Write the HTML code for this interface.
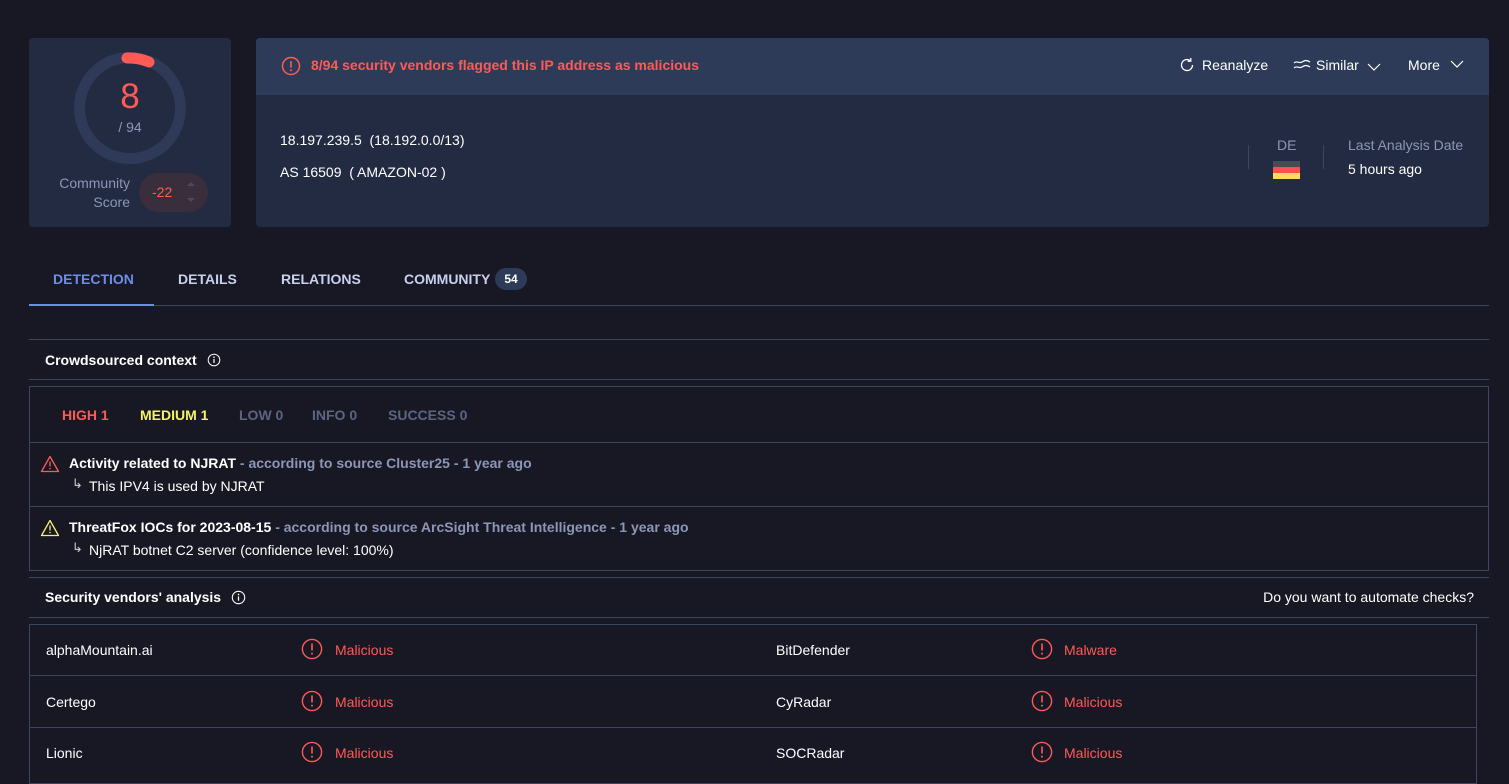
<!DOCTYPE html>
<html><head><meta charset="utf-8"><style>
*{box-sizing:border-box;margin:0;padding:0}
body{width:1509px;height:775px;overflow:hidden;background:#181825;font-family:"Liberation Sans",sans-serif;color:#fff;font-size:14px;position:relative}
.a{position:absolute;white-space:nowrap}
.hl{position:absolute;height:1px;background:#3c4663}
.red{color:#ff5a55}
.mut{color:#8b97b5}
.b{font-weight:bold}
</style></head><body>
<div class="a" style="left:29px;top:38px;width:202px;height:189px;background:#232b42;border-radius:4px"></div>
<svg class="a" style="left:73px;top:51px" width="114" height="114" viewBox="0 0 114 114">
<circle cx="57" cy="57" r="50.5" fill="none" stroke="#2e3a57" stroke-width="11"/>
<path d="M54 7 A50.5 50.5 0 0 1 76 11" fill="none" stroke="#ff5a55" stroke-width="11" stroke-linecap="round"/>
</svg>
<div class="a red" style="left:100px;top:77px;width:60px;text-align:center;font-size:35px">8</div>
<div class="a mut" style="left:100px;top:119px;width:60px;text-align:center;font-size:14px">/ 94</div>
<div class="a mut" style="left:40px;top:174px;width:90px;text-align:right;font-size:14px;line-height:19px">Community<br>Score</div>
<div class="a" style="left:139px;top:173px;width:69px;height:39px;background:#3a2d3c;border-radius:20px"></div>
<div class="a red" style="left:152px;top:184px;font-size:14px">-22</div>
<div class="a" style="left:187px;top:182px;width:0;height:0;border-left:4px solid transparent;border-right:4px solid transparent;border-bottom:4px solid #4c4a5c"></div>
<div class="a" style="left:187px;top:198px;width:0;height:0;border-left:4px solid transparent;border-right:4px solid transparent;border-top:4px solid #4c4a5c"></div>
<div class="a" style="left:256px;top:38px;width:1233px;height:189px;background:#232b42;border-radius:4px;overflow:hidden"><div style="height:57px;background:#2e3b58"></div></div>
<svg class="a" style="left:281px;top:56px" width="20" height="20" viewBox="0 0 20 20"><circle cx="10" cy="10" r="8.5" fill="none" stroke="#ff5a55" stroke-width="1.5"/><path d="M10 5v6.5" stroke="#ff5a55" stroke-width="1.6"/><circle cx="10" cy="14.3" r="1" fill="#ff5a55"/></svg>
<div class="a red b" style="left:311px;top:57px;font-size:14px">8/94 security vendors flagged this IP address as malicious</div>
<svg class="a" style="left:1179px;top:57px" width="16" height="16" viewBox="0 0 16 16"><path d="M13.5 8A5.5 5.5 0 1 1 11.5 3.8" fill="none" stroke="#fff" stroke-width="1.3"/><path d="M11.8 1v3.2h-3.2" fill="none" stroke="#fff" stroke-width="1.3"/></svg>
<div class="a" style="left:1202px;top:57px;font-size:14px">Reanalyze</div>
<svg class="a" style="left:1293px;top:59px" width="18" height="12" viewBox="0 0 18 12"><path d="M1 4c3-3 5 1 8-1s5-2 8 0M1 9c3-3 5 1 8-1s5-2 8 0" fill="none" stroke="#fff" stroke-width="1.2"/></svg>
<div class="a" style="left:1316px;top:57px;font-size:14px">Similar</div>
<svg class="a" style="left:1367px;top:62px" width="14" height="10" viewBox="0 0 14 10"><path d="M1 2l6 6 6-6" fill="none" stroke="#fff" stroke-width="1.2"/></svg>
<div class="a" style="left:1408px;top:57px;font-size:14px">More</div>
<svg class="a" style="left:1450px;top:59px" width="14" height="10" viewBox="0 0 14 10"><path d="M1 2l6 6 6-6" fill="none" stroke="#fff" stroke-width="1.2"/></svg>
<div class="a" style="left:280px;top:132px;font-size:14px">18.197.239.5&nbsp; (18.192.0.0/13)</div>
<div class="a" style="left:280px;top:164px;font-size:14px">AS 16509&nbsp; ( AMAZON-02 )</div>
<div class="a" style="left:1248px;top:145px;width:1px;height:24px;background:#3c4663"></div>
<div class="a" style="left:1323px;top:145px;width:1px;height:24px;background:#3c4663"></div>
<div class="a mut" style="left:1277px;top:137px;font-size:14px">DE</div>
<div class="a" style="left:1273px;top:161px;width:27px;height:18px;background:linear-gradient(#4a4a52 0 33%,#ff4f55 33% 66%,#ffdc57 66%)"></div>
<div class="a mut" style="left:1348px;top:137px;font-size:14px">Last Analysis Date</div>
<div class="a" style="left:1348px;top:161px;font-size:14px">5 hours ago</div>
<div class="a b" style="left:53px;top:271px;font-size:14px;color:#6d8ee6">DETECTION</div>
<div class="a b" style="left:178px;top:271px;font-size:14px;color:#c8d1ec">DETAILS</div>
<div class="a b" style="left:281px;top:271px;font-size:14px;color:#c8d1ec">RELATIONS</div>
<div class="a b" style="left:404px;top:271px;font-size:14px;color:#c8d1ec">COMMUNITY</div>
<div class="a b" style="left:495px;top:268px;width:32px;height:22px;border-radius:11px;background:#2e3b58;font-size:12px;text-align:center;line-height:22px">54</div>
<div class="hl" style="left:29px;top:305px;width:1460px"></div>
<div class="a" style="left:29px;top:304px;width:125px;height:2px;background:#6d8ee6"></div>
<div class="hl" style="left:29px;top:339px;width:1460px"></div>
<div class="a b" style="left:45px;top:352px;font-size:14px">Crowdsourced context</div>
<svg class="a" style="left:207px;top:353px" width="14" height="14" viewBox="0 0 14 14"><circle cx="7" cy="7" r="5.8" fill="none" stroke="#fff" stroke-width="1"/><path d="M7 6v4" stroke="#fff" stroke-width="1.2"/><circle cx="7" cy="4.2" r=".8" fill="#fff"/></svg>
<div class="hl" style="left:29px;top:379px;width:1460px"></div>
<div class="a" style="left:29px;top:386px;width:1460px;height:185px;border:1px solid #3c4663"></div>
<div class="a b red" style="left:62px;top:407px;font-size:14px">HIGH 1</div>
<div class="a b" style="left:140px;top:407px;font-size:14px;color:#f3f36a">MEDIUM 1</div>
<div class="a b" style="left:239px;top:407px;font-size:14px;color:#5b6580">LOW 0</div>
<div class="a b" style="left:312px;top:407px;font-size:14px;color:#5b6580">INFO 0</div>
<div class="a b" style="left:388px;top:407px;font-size:14px;color:#5b6580">SUCCESS 0</div>
<div class="hl" style="left:29px;top:442px;width:1460px"></div>
<svg class="a" style="left:40px;top:455px" width="20" height="18" viewBox="0 0 20 18"><path d="M10 1.5L18.5 16.5H1.5Z" fill="none" stroke="#ff5a55" stroke-width="1.3" stroke-linejoin="round"/><path d="M10 6.5v5" stroke="#ff5a55" stroke-width="1.3"/><circle cx="10" cy="13.5" r=".8" fill="#ff5a55"/></svg>
<div class="a" style="left:69px;top:455px;font-size:14px"><b>Activity related to NJRAT</b> <span class="mut b">- according to source Cluster25 - 1 year ago</span></div>
<div class="a" style="left:72px;top:476px;font-size:13px;color:#ccc">↳</div>
<div class="a" style="left:89px;top:478px;font-size:14px">This IPV4 is used by NJRAT</div>
<div class="hl" style="left:29px;top:506px;width:1460px"></div>
<svg class="a" style="left:40px;top:519px" width="20" height="18" viewBox="0 0 20 18"><path d="M10 1.5L18.5 16.5H1.5Z" fill="none" stroke="#f3f36a" stroke-width="1.3" stroke-linejoin="round"/><path d="M10 6.5v5" stroke="#f3f36a" stroke-width="1.3"/><circle cx="10" cy="13.5" r=".8" fill="#f3f36a"/></svg>
<div class="a" style="left:69px;top:519px;font-size:14px"><b>ThreatFox IOCs for 2023-08-15</b> <span class="mut b">- according to source ArcSight Threat Intelligence - 1 year ago</span></div>
<div class="a" style="left:72px;top:540px;font-size:13px;color:#ccc">↳</div>
<div class="a" style="left:89px;top:542px;font-size:14px">NjRAT botnet C2 server (confidence level: 100%)</div>
<div class="hl" style="left:29px;top:577px;width:1460px"></div>
<div class="a b" style="left:45px;top:589px;font-size:14px">Security vendors' analysis</div>
<svg class="a" style="left:231px;top:590px" width="15" height="15" viewBox="0 0 14 14"><circle cx="7" cy="7" r="5.8" fill="none" stroke="#fff" stroke-width="1"/><path d="M7 6v4" stroke="#fff" stroke-width="1.2"/><circle cx="7" cy="4.2" r=".8" fill="#fff"/></svg>
<div class="a" style="right:35px;top:589px;font-size:14px">Do you want to automate checks?</div>
<div class="hl" style="left:29px;top:617px;width:1460px"></div>
<div class="a" style="left:29px;top:624px;width:1448px;height:160px;border:1px solid #3c4663"></div>
<div class="hl" style="left:29px;top:675px;width:1448px"></div>
<div class="hl" style="left:29px;top:727px;width:1448px"></div>
<div class="a" style="left:46px;top:642px">alphaMountain.ai</div>
<div class="a" style="left:46px;top:694px">Certego</div>
<div class="a" style="left:46px;top:745px">Lionic</div>
<div class="a" style="left:776px;top:642px">BitDefender</div>
<div class="a" style="left:776px;top:694px">CyRadar</div>
<div class="a" style="left:776px;top:745px">SOCRadar</div>
<div class="a red" style="left:335px;top:642px">Malicious</div>
<div class="a red" style="left:335px;top:694px">Malicious</div>
<div class="a red" style="left:335px;top:745px">Malicious</div>
<div class="a red" style="left:1064px;top:642px">Malware</div>
<div class="a red" style="left:1064px;top:694px">Malicious</div>
<div class="a red" style="left:1064px;top:745px">Malicious</div>
<svg class="a" style="left:301px;top:638px" width="22" height="22" viewBox="0 0 22 22"><circle cx="11" cy="11" r="9.6" fill="none" stroke="#ff5a55" stroke-width="1.4"/><path d="M11 5.5v7" stroke="#ff5a55" stroke-width="1.6"/><circle cx="11" cy="15.6" r="1" fill="#ff5a55"/></svg>
<svg class="a" style="left:301px;top:690px" width="22" height="22" viewBox="0 0 22 22"><circle cx="11" cy="11" r="9.6" fill="none" stroke="#ff5a55" stroke-width="1.4"/><path d="M11 5.5v7" stroke="#ff5a55" stroke-width="1.6"/><circle cx="11" cy="15.6" r="1" fill="#ff5a55"/></svg>
<svg class="a" style="left:301px;top:741px" width="22" height="22" viewBox="0 0 22 22"><circle cx="11" cy="11" r="9.6" fill="none" stroke="#ff5a55" stroke-width="1.4"/><path d="M11 5.5v7" stroke="#ff5a55" stroke-width="1.6"/><circle cx="11" cy="15.6" r="1" fill="#ff5a55"/></svg>
<svg class="a" style="left:1031px;top:638px" width="22" height="22" viewBox="0 0 22 22"><circle cx="11" cy="11" r="9.6" fill="none" stroke="#ff5a55" stroke-width="1.4"/><path d="M11 5.5v7" stroke="#ff5a55" stroke-width="1.6"/><circle cx="11" cy="15.6" r="1" fill="#ff5a55"/></svg>
<svg class="a" style="left:1031px;top:690px" width="22" height="22" viewBox="0 0 22 22"><circle cx="11" cy="11" r="9.6" fill="none" stroke="#ff5a55" stroke-width="1.4"/><path d="M11 5.5v7" stroke="#ff5a55" stroke-width="1.6"/><circle cx="11" cy="15.6" r="1" fill="#ff5a55"/></svg>
<svg class="a" style="left:1031px;top:741px" width="22" height="22" viewBox="0 0 22 22"><circle cx="11" cy="11" r="9.6" fill="none" stroke="#ff5a55" stroke-width="1.4"/><path d="M11 5.5v7" stroke="#ff5a55" stroke-width="1.6"/><circle cx="11" cy="15.6" r="1" fill="#ff5a55"/></svg>
</body></html>
